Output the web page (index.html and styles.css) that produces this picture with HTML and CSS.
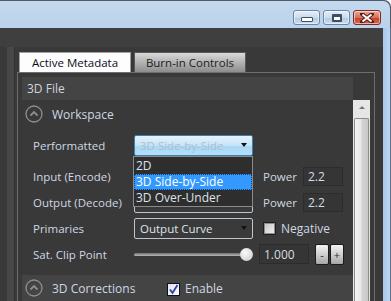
FILE: index.html
```html
<!DOCTYPE html>
<html lang="en">
  <head>
    <meta charset="UTF-8" />
    <title>Active Metadata</title>
    <link rel="stylesheet" href="styles.css">
  </head>
  <body>
    <div class="window">
      <div class="titlebar">
        <div class="caption-buttons">
          <div class="cap cap-min"><span class="glyph-min"></span></div>
          <div class="cap cap-max"><span class="glyph-max"></span></div>
          <div class="cap cap-close">
            <svg width="14" height="10" viewBox="0 0 14 10">
              <path d="M2 1 L12 9 M12 1 L2 9" stroke="#5a2018" stroke-width="4" stroke-linecap="square" />
              <path d="M2.5 1.5 L11.5 8.5 M11.5 1.5 L2.5 8.5" stroke="#fff" stroke-width="2" />
            </svg>
          </div>
        </div>
      </div>
      <div class="frame">
        <div class="client">
          <div class="toolbar"></div>
          <div class="workarea">
            <div class="side-strip"></div>
            <div class="panel-wrap">
              <div class="tabs">
                <div class="tab tab-active">Active Metadata</div>
                <div class="tab">Burn-in Controls</div>
              </div>
              <div class="panel">
                <div class="section-title">3D File</div>
                <div class="content">
                  <div class="group-head">
                    <span class="expander">
                      <svg width="18" height="18" viewBox="0 0 18 18">
                        <circle cx="9" cy="9" r="8" fill="none" stroke="#8e8e8e" stroke-width="1.3" />
                        <path d="M5.5 10.5 L9 7 L12.5 10.5" fill="none" stroke="#8e8e8e" stroke-width="1.8" />
                      </svg>
                    </span>
                    <span class="group-name">Workspace</span>
                  </div>

                  <div class="row row-first">
                    <span class="label">Performatted</span>
                    <div class="combo combo-focus">
                      <span class="combo-text">3D Side-by-Side</span>
                      <span class="arrow"></span>
                    </div>
                    <ul class="droplist">
                      <li>2D</li>
                      <li class="selected">3D Side-by-Side</li>
                      <li>3D Over-Under</li>
                    </ul>
                  </div>

                  <div class="row">
                    <span class="label">Input (Encode)</span>
                    <div class="combo"><span class="combo-text"></span><span class="arrow"></span></div>
                    <span class="side-label">Power</span>
                    <div class="field field-power">2.2</div>
                  </div>

                  <div class="row">
                    <span class="label">Output (Decode)</span>
                    <div class="combo"><span class="combo-text"></span><span class="arrow"></span></div>
                    <span class="side-label">Power</span>
                    <div class="field field-power">2.2</div>
                  </div>

                  <div class="row">
                    <span class="label">Primaries</span>
                    <div class="combo"><span class="combo-text">Output Curve</span><span class="arrow"></span></div>
                    <span class="check"></span>
                    <span class="check-label">Negative</span>
                  </div>

                  <div class="row">
                    <span class="label">Sat. Clip Point</span>
                    <div class="slider">
                      <span class="track"></span>
                      <span class="thumb"></span>
                    </div>
                    <div class="field field-clip">1.000</div>
                    <div class="steppers">
                      <span class="step">-</span>
                      <span class="step">+</span>
                    </div>
                  </div>

                  <div class="group-head group-band">
                    <span class="expander">
                      <svg width="18" height="18" viewBox="0 0 18 18">
                        <circle cx="9" cy="9" r="8" fill="none" stroke="#8e8e8e" stroke-width="1.3" />
                        <path d="M5.5 10.5 L9 7 L12.5 10.5" fill="none" stroke="#8e8e8e" stroke-width="1.8" />
                      </svg>
                    </span>
                    <span class="group-name group-name-wide">3D Corrections</span>
                    <span class="check check-on">
                      <svg width="11" height="11" viewBox="0 0 11 11">
                        <path d="M2 5.5 L4.5 9 L9.5 1" fill="none" stroke="#2a3fa8" stroke-width="1.8" />
                      </svg>
                    </span>
                    <span class="check-label">Enable</span>
                  </div>
                </div>
                <div class="scrollbar">
                  <div class="scroll-up"><span class="up-arrow"></span></div>
                  <div class="scroll-thumb"></div>
                </div>
              </div>
            </div>
          </div>
        </div>
        <div class="frame-right"></div>
      </div>
    </div>
  </body>
</html>
```

FILE: styles.css
```css
html, body {
  margin: 0;
  padding: 0;
}
body {
  width: 391px;
  height: 301px;
  overflow: hidden;
  font-family: "Open Sans", "Noto Sans", sans-serif;
  font-size: 11.5px;
  color: #cfd8e2;
}
.window {
  display: flex;
  flex-direction: column;
  height: 301px;
}
.titlebar {
  height: 28px;
  flex: none;
  display: flex;
  justify-content: flex-end;
  background: linear-gradient(#c4d9ee, #bad2ea);
  border-top-right-radius: 7px;
  box-shadow: inset -1px 1px 0 #4f5c6a;
}
.caption-buttons {
  display: flex;
  gap: 3px;
  padding: 10px 10px 0 0;
}
.cap {
  width: 25px;
  height: 13px;
  border: 1px solid #6c85a3;
  border-radius: 3px;
  display: flex;
  align-items: center;
  justify-content: center;
  background: linear-gradient(#e4eef8 0%, #cbdcee 50%, #b3cae3 51%, #c9dcf0 100%);
  box-shadow: inset 0 0 0 1px rgba(255, 255, 255, 0.5);
}
.cap-close {
  width: 26px;
  border-color: #7b2b20;
  background: linear-gradient(#e9a898 0%, #d8705c 50%, #c0402a 51%, #d26a50 100%);
}
.glyph-min {
  width: 10px;
  height: 3px;
  margin-top: 4px;
  background: #fff;
  border: 1px solid #3c4f66;
  border-radius: 1px;
}
.glyph-max {
  width: 8px;
  height: 5px;
  background: #fff;
  border: 1px solid #3c4f66;
  box-shadow: inset 0 0 0 1px #3c4f66;
  border-top-width: 2px;
  border-radius: 1px;
}
.frame {
  flex: 1;
  display: flex;
}
.client {
  width: 383px;
  display: flex;
  flex-direction: column;
  background: #393939;
}
.frame-right {
  flex: 1;
  background: linear-gradient(90deg, #a9c8e8, #bcd6f0);
  border-right: 1px solid #5d7189;
}
.toolbar {
  height: 19px;
  flex: none;
  background: #3f3f3f;
}
.workarea {
  flex: 1;
  display: flex;
  padding-left: 7px;
}
.side-strip {
  width: 7px;
  background: #484848;
  border-right: 1px solid #333;
}
.panel-wrap {
  margin-left: 2px;
  width: 358px;
  padding-top: 5px;
  display: flex;
  flex-direction: column;
}
.tabs {
  display: flex;
  gap: 3px;
  padding-left: 2px;
  height: 20px;
}
.tab {
  width: 110px;
  border: 1px solid #595959;
  border-bottom: none;
  display: flex;
  align-items: center;
  justify-content: center;
  color: #1c1c1c;
  background: linear-gradient(#d9d9d9, #b2b2b2 50%, #8d8d8d);
}
.tab-active {
  background: #fdfdfd;
  border-color: #a0a0a0;
  color: #0c0c1c;
}
.panel {
  flex: 1;
  border: 1px solid #6d6d6d;
  padding: 4px 4px 0 4px;
  display: grid;
  grid-template-columns: 331px 17px;
  grid-template-rows: 23px 1fr;
  overflow: hidden;
}
.section-title {
  background: #444;
  padding-left: 5px;
  display: flex;
  align-items: center;
  font-size: 12px;
  color: #d0d6dc;
}
.content {
  grid-column: 1;
  grid-row: 2;
  display: flex;
  flex-direction: column;
}
.scrollbar {
  grid-column: 2;
  grid-row: 2;
  display: flex;
  flex-direction: column;
  background: #e6e6e6;
}
.scroll-up {
  height: 17px;
  display: flex;
  align-items: center;
  justify-content: center;
}
.up-arrow {
  width: 0;
  height: 0;
  border-left: 3px solid transparent;
  border-right: 3px solid transparent;
  border-bottom: 3px solid #777;
  margin-bottom: 2px;
}
.scroll-thumb {
  flex: 1;
  margin: 1px 1px 0 1px;
  border: 1px solid #8b8b8b;
  border-bottom: none;
  border-radius: 2px 2px 0 0;
  background: linear-gradient(90deg, #f3f3f3, #e8e8e8 45%, #d2d2d2 55%, #c8c8c8);
}
.group-head {
  height: 28px;
  display: flex;
  align-items: center;
  padding-left: 3px;
  flex: none;
}
.expander {
  display: flex;
  width: 18px;
  height: 18px;
}
.group-name {
  margin-left: 9px;
  font-size: 12px;
  color: #cfd8e2;
}
.group-name-wide {
  width: 106px;
}
.group-band {
  margin-top: 8px;
  background: #444;
  height: 30px;
  align-items: flex-start;
  padding-top: 4px;
}
.group-band .group-name {
  margin-top: 1px;
}
.group-band .check {
  margin-top: 4px;
}
.group-band .check-label {
  margin-top: 1px;
}
.row {
  height: 26px;
  display: flex;
  align-items: center;
  padding-left: 11px;
  position: relative;
  flex: none;
}
.row-first {
  margin-top: 4px;
  margin-bottom: 5px;
}
.label {
  width: 101px;
}
.combo {
  border: 1px solid #bfc5cc;
  border-radius: 2px;
  display: flex;
  align-items: center;
  padding-left: 5px;
  box-sizing: border-box;
  width: 119px;
  height: 21px;
  background: #3a3a3a;
  color: #dde4ec;
}
.combo-text {
  flex: 1;
}
.arrow {
  width: 0;
  height: 0;
  border-left: 3.5px solid transparent;
  border-right: 3.5px solid transparent;
  border-top: 4px solid #111;
  margin-right: 5px;
}
.combo-focus {
  border-color: #3c7fb1;
  background: linear-gradient(#e6f3fc, #c4e4f8 50%, #a8d8f4 51%, #b4def6);
  color: #a9bfd0;
}
.droplist {
  position: absolute;
  left: 111px;
  top: 24px;
  width: 118px;
  margin: 0;
  padding: 1px 0 0 0;
  list-style: none;
  background: #2e2e2e;
  border: 1px solid #8a8a8a;
  color: #dde4ec;
  font-size: 12px;
  z-index: 2;
}
.droplist li {
  height: 16px;
  line-height: 16px;
  padding-left: 2px;
  box-sizing: border-box;
}
.droplist .selected {
  background: #3399ff;
  color: #fff;
  outline: 1px dotted #1a3a66;
  outline-offset: -1px;
}
.side-label {
  margin-left: 10px;
  width: 40px;
}
.field {
  height: 19px;
  box-sizing: border-box;
  background: #353535;
  border: 1px solid #2c2c2c;
  display: flex;
  align-items: center;
  padding-left: 4px;
  color: #d5dde6;
}
.field-power {
  width: 40px;
  font-size: 12px;
}
.check {
  width: 13px;
  height: 13px;
  box-sizing: border-box;
  border: 1px solid #1e1e1e;
  background: linear-gradient(135deg, #c4c4c4, #f2f2f2);
  box-shadow: inset 0 0 0 1px #8c8c8c;
  margin-left: 10px;
  display: flex;
  align-items: center;
  justify-content: center;
}
.check-label {
  margin-left: 5px;
  font-size: 12px;
}
.check-on {
  margin-left: 9px;
  background: linear-gradient(135deg, #e0e4f0, #fafbfd);
  box-shadow: none;
  border: 1px solid #111;
}
.slider {
  width: 119px;
  height: 16px;
  display: flex;
  align-items: center;
}
.track {
  flex: 1;
  height: 3px;
  border-radius: 2px;
  background: linear-gradient(#707070, #b8b8b8);
}
.thumb {
  width: 13px;
  height: 13px;
  border-radius: 50%;
  margin-left: -1px;
  background: radial-gradient(circle at 40% 35%, #fafafa, #d6d6d6 70%, #a8a8a8);
}
.field-clip {
  width: 50px;
  height: 20px;
  margin-left: 6px;
  font-size: 12px;
}
.steppers {
  display: flex;
  margin-left: 6px;
  gap: 1px;
}
.step {
  width: 14px;
  height: 21px;
  box-sizing: border-box;
  border: 1px solid #1c1c1c;
  border-radius: 2px;
  display: flex;
  align-items: center;
  justify-content: center;
  background: linear-gradient(#f4f4f4, #cfcfcf 50%, #a6a6a6);
  color: #1e2a44;
  font-size: 11px;
  line-height: 1;
}
```
